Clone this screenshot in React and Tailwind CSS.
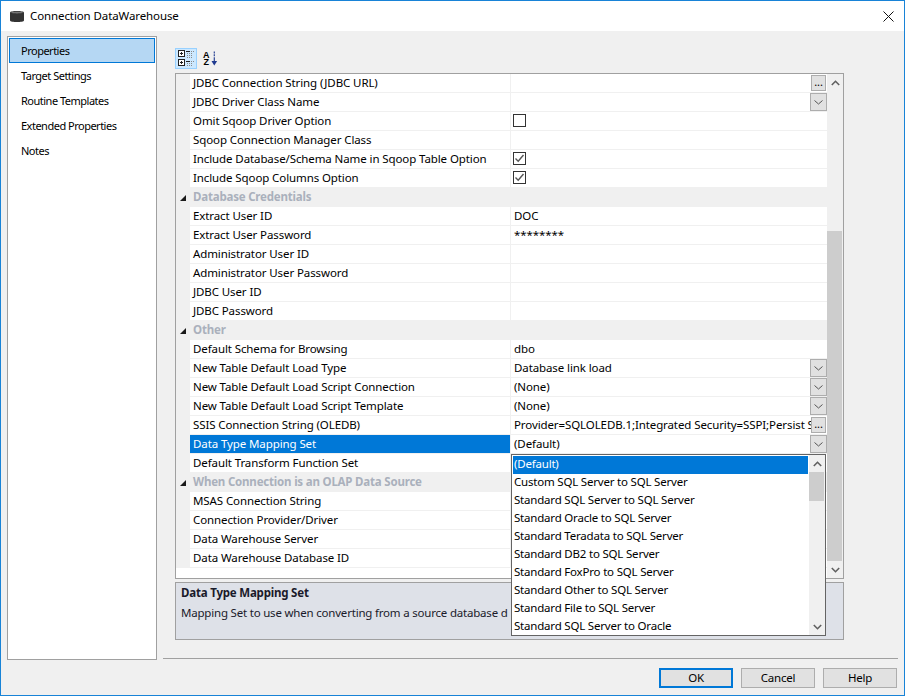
import React from 'react';

const FONT = "font-['Noto_Sans','Liberation_Sans',sans-serif]";

// kind: text | ellipsis | combo | check | group
const rows = [
  { label: 'JDBC Connection String (JDBC URL)', kind: 'ellipsis' },
  { label: 'JDBC Driver Class Name', kind: 'combo' },
  { label: 'Omit Sqoop Driver Option', kind: 'check' },
  { label: 'Sqoop Connection Manager Class' },
  { label: 'Include Database/Schema Name in Sqoop Table Option', kind: 'check', checked: true },
  { label: 'Include Sqoop Columns Option', kind: 'check', checked: true },
  { label: 'Database Credentials', kind: 'group' },
  { label: 'Extract User ID', value: 'DOC' },
  { label: 'Extract User Password', value: '********' },
  { label: 'Administrator User ID' },
  { label: 'Administrator User Password' },
  { label: 'JDBC User ID' },
  { label: 'JDBC Password' },
  { label: 'Other', kind: 'group' },
  { label: 'Default Schema for Browsing', value: 'dbo' },
  { label: 'New Table Default Load Type', value: 'Database link load', kind: 'combo' },
  { label: 'New Table Default Load Script Connection', value: '(None)', kind: 'combo' },
  { label: 'New Table Default Load Script Template', value: '(None)', kind: 'combo' },
  { label: 'SSIS Connection String (OLEDB)', value: 'Provider=SQLOLEDB.1;Integrated Security=SSPI;Persist S', kind: 'ellipsis' },
  { label: 'Data Type Mapping Set', value: '(Default)', kind: 'combo', selected: true },
  { label: 'Default Transform Function Set' },
  { label: 'When Connection is an OLAP Data Source', kind: 'group' },
  { label: 'MSAS Connection String' },
  { label: 'Connection Provider/Driver' },
  { label: 'Data Warehouse Server' },
  { label: 'Data Warehouse Database ID' },
];

const navItems = ['Properties', 'Target Settings', 'Routine Templates', 'Extended Properties', 'Notes'];

const dropdownItems = [
  '(Default)',
  'Custom SQL Server to SQL Server',
  'Standard SQL Server to SQL Server',
  'Standard Oracle to SQL Server',
  'Standard Teradata to SQL Server',
  'Standard DB2 to SQL Server',
  'Standard FoxPro to SQL Server',
  'Standard Other to SQL Server',
  'Standard File to SQL Server',
  'Standard SQL Server to Oracle',
];

function Chevron({ up, className = 'text-[#606060]' }) {
  return (
    <svg width="9" height="6" viewBox="0 0 9 6" className={className}>
      <path d={up ? 'M0.8 5 L4.5 1.3 L8.2 5' : 'M0.8 1 L4.5 4.7 L8.2 1'} fill="none" stroke="currentColor" strokeWidth="1.6" />
    </svg>
  );
}

function CellButton({ kind }) {
  if (kind === 'ellipsis') {
    return (
      <div className="ml-auto mr-[1px] mt-[1px] flex h-[16px] w-[15px] shrink-0 items-center justify-center self-start border border-[#adadad] bg-[#e1e1e1] pb-[3px] text-[11px] leading-none text-black">
        ...
      </div>
    );
  }
  return (
    <div className="ml-auto flex h-[18px] w-[17px] shrink-0 items-center justify-center self-start border border-[#adadad] bg-[#e1e1e1]">
      <svg width="9" height="5" viewBox="0 0 9 5" className="text-[#555]">
        <path d="M0.5 0.5 L4.5 4 L8.5 0.5" fill="none" stroke="currentColor" strokeWidth="1" />
      </svg>
    </div>
  );
}

function Checkbox({ checked }) {
  return (
    <div className="-ml-[1px] flex h-[13px] w-[13px] items-center justify-center border border-[#333] bg-white">
      {checked && (
        <svg width="11" height="11" viewBox="0 0 11 11" className="text-[#555]">
          <path d="M1.5 5.5 L4.2 8.2 L9.5 2" fill="none" stroke="currentColor" strokeWidth="1.4" />
        </svg>
      )}
    </div>
  );
}

function Row({ row }) {
  if (row.kind === 'group') {
    return (
      <div className="flex h-[19px] items-center bg-[#f0f0f0]">
        <div className="flex w-[14px] justify-end pr-[4px]">
          <svg width="6" height="6" viewBox="0 0 6 6">
            <path d="M6 0 V6 H0 Z" fill="#1a1a1a" />
          </svg>
        </div>
        <span className="pl-[3px] pb-[1px] font-bold tracking-[-0.2px] text-[#aab0bc]">{row.label}</span>
      </div>
    );
  }
  return (
    <div className="flex h-[19px] tracking-[-0.1px]">
      <div className="h-[19px] w-[14px] shrink-0 bg-[#f0f0f0]" />
      <div
        className={`flex h-[19px] w-[320px] shrink-0 items-center pl-[3px] pb-[1px] ${
          row.selected ? 'border-b border-[#f0f0f0] bg-[#0078d7] text-white' : 'border-b border-[#f0f0f0] bg-white'
        }`}
      >
        {row.label}
      </div>
      <div className="flex h-[19px] min-w-0 flex-1 border-b border-l border-[#f0f0f0] bg-white">
        <div className="flex min-w-0 flex-1 items-center overflow-hidden whitespace-nowrap pl-[3px] pb-[1px]">
          {row.kind === 'check' ? <Checkbox checked={row.checked} /> : row.value}
        </div>
        {(row.kind === 'combo' || row.kind === 'ellipsis') && <CellButton kind={row.kind} />}
      </div>
    </div>
  );
}

function CategorizedIcon() {
  return (
    <svg width="17" height="17" viewBox="0 0 17 17">
      <rect x="0.5" y="0.5" width="6" height="6" fill="#fff" stroke="#222" />
      <rect x="0.5" y="9.5" width="6" height="6" fill="#fff" stroke="#222" />
      <path d="M2 3.5 H5 M3.5 2 V5 M2 12.5 H5 M3.5 11 V14" stroke="#222" />
      <path d="M8 1.5 H12 M8 11.5 H12" stroke="#222" />
      <path d="M9 3.5 H15 M9 5.5 H15 M9 7.5 H15 M13 1.5 H16 M9 13.5 H15 M9 15.5 H15 M13 11.5 H16" stroke="#8a8a8a" strokeDasharray="1 1" />
    </svg>
  );
}

function SortedIcon() {
  return (
    <div className="flex h-[21px] w-[16px] items-center">
      <div className="w-[9px] text-center font-['Liberation_Sans',sans-serif] text-[9px] font-bold leading-[7px] tracking-normal text-black">
        A Z
      </div>
      <svg width="7" height="16" viewBox="0 0 7 16" className="ml-[1px]">
        <path d="M3.5 0 V2 M3.5 3 V5 M3.5 6 V11" stroke="#1f3a8f" strokeWidth="1.2" />
        <path d="M0.5 10 H6.5 L3.5 15 Z" fill="#1f3a8f" />
      </svg>
    </div>
  );
}

function DatabaseIcon() {
  return (
    <svg width="14" height="13" viewBox="0 0 14 13">
      <path d="M0 2.5 C0 0.5 14 0.5 14 2.5 V10.5 C14 12.5 0 12.5 0 10.5 Z" fill="#333" />
      <path d="M1 2.6 C2 1.3 12 1.3 13 2.6 C12 3.8 2 3.8 1 2.6 Z" fill="#777" />
    </svg>
  );
}

function Dropdown() {
  return (
    <div className="absolute left-[510px] top-[453px] flex h-[182px] w-[315px] border border-[#646464] bg-white">
      <div className="flex w-[296px] flex-col pl-[1px] pt-[1px]">
        {dropdownItems.map((item, i) => (
          <div
            key={item}
            className={`flex h-[18px] shrink-0 items-center whitespace-nowrap pl-[1px] pb-[2px] ${i === 0 ? 'bg-[#0078d7] text-white' : ''}`}
          >
            {item}
          </div>
        ))}
      </div>
      <div className="ml-[1px] flex flex-1 flex-col bg-[#f0f0f0]">
        <div className="flex h-[17px] items-center justify-center">
          <Chevron up />
        </div>
        <div className="mr-[1px] h-[29px] bg-[#cdcdcd]" />
        <div className="flex-1" />
        <div className="flex h-[17px] items-center justify-center">
          <Chevron />
        </div>
      </div>
    </div>
  );
}

function FooterButton({ children, primary }) {
  return (
    <button
      className={`h-[20px] w-[74px] bg-[#e1e1e1] text-[11.5px] leading-none text-black ${
        primary ? 'border-2 border-[#0078d7]' : 'border border-[#adadad]'
      }`}
    >
      {children}
    </button>
  );
}

export default function App() {
  return (
    <div className={`${FONT} relative flex h-[696px] w-[905px] flex-col border border-[#1883d7] bg-[#f0f0f0] text-[11.5px] leading-none tracking-[-0.2px] text-black`}>
      {/* title bar */}
      <div className="flex h-[30px] shrink-0 items-center bg-white">
        <div className="ml-[9px] mt-[1px] flex">
          <DatabaseIcon />
        </div>
        <span className="ml-[6px] tracking-[-0.1px]">Connection DataWarehouse</span>
        <svg width="11" height="11" viewBox="0 0 11 11" className="ml-auto mr-[10px]">
          <path d="M0.5 0.5 L10.5 10.5 M10.5 0.5 L0.5 10.5" stroke="#111" strokeWidth="1" />
        </svg>
      </div>

      <div className="flex flex-1">
        {/* left nav */}
        <div className="ml-[6px] mt-[5px] h-[624px] w-[150px] shrink-0 border border-[#a0a0a0] bg-white p-[1px] text-[11px] tracking-[-0.5px]">
          {navItems.map((item, i) => (
            <div
              key={item}
              className={`flex h-[25px] items-center pl-[11px] ${i === 0 ? 'border border-[#0078d7] bg-[#b5d7f3]' : 'border border-transparent'}`}
            >
              {item}
            </div>
          ))}
        </div>

        {/* right column */}
        <div className="ml-[6px] flex w-[735px] flex-col">
          <div className="ml-[12px] mt-[17px] flex h-[21px] w-[669px] items-center gap-[5px]">
            <div className="flex h-[21px] w-[22px] items-center justify-center border border-[#99d1ff] bg-[#cce8ff]">
              <CategorizedIcon />
            </div>
            <SortedIcon />
          </div>

          {/* property grid */}
          <div className="ml-[12px] mt-[4px] flex h-[506px] w-[669px] border border-[#a0a0a0] bg-white">
            <div className="min-w-0 flex-1">
              {rows.map((row) => (
                <Row key={row.label} row={row} />
              ))}
            </div>
            <div className="flex w-[16px] shrink-0 flex-col bg-[#f0f0f0]">
              <div className="flex h-[17px] items-center justify-center">
                <Chevron up />
              </div>
              <div className="mt-[140px] mr-[1px] h-[330px] bg-[#cdcdcd]" />
              <div className="flex-1" />
              <div className="flex h-[17px] items-center justify-center">
                <Chevron />
              </div>
            </div>
          </div>

          {/* description panel */}
          <div className="ml-[12px] mt-[3px] h-[58px] w-[669px] border border-[#a0a0a0] bg-[#dee1e8] pl-[5px] pt-[2px] text-[#1a1a2a]">
            <div className="flex h-[16px] items-center font-bold">Data Type Mapping Set</div>
            <div className="mt-[4px] flex h-[16px] items-center whitespace-nowrap">
              Mapping Set to use when converting from a source database d
            </div>
          </div>

          <div className="mt-[18px] h-[1px] w-full bg-[#a0a0a0]" />

          <div className="mt-[9px] flex justify-end gap-[8px] pr-[1px]">
            <FooterButton primary>OK</FooterButton>
            <FooterButton>Cancel</FooterButton>
            <FooterButton>Help</FooterButton>
          </div>
        </div>
      </div>

      <Dropdown />
    </div>
  );
}
